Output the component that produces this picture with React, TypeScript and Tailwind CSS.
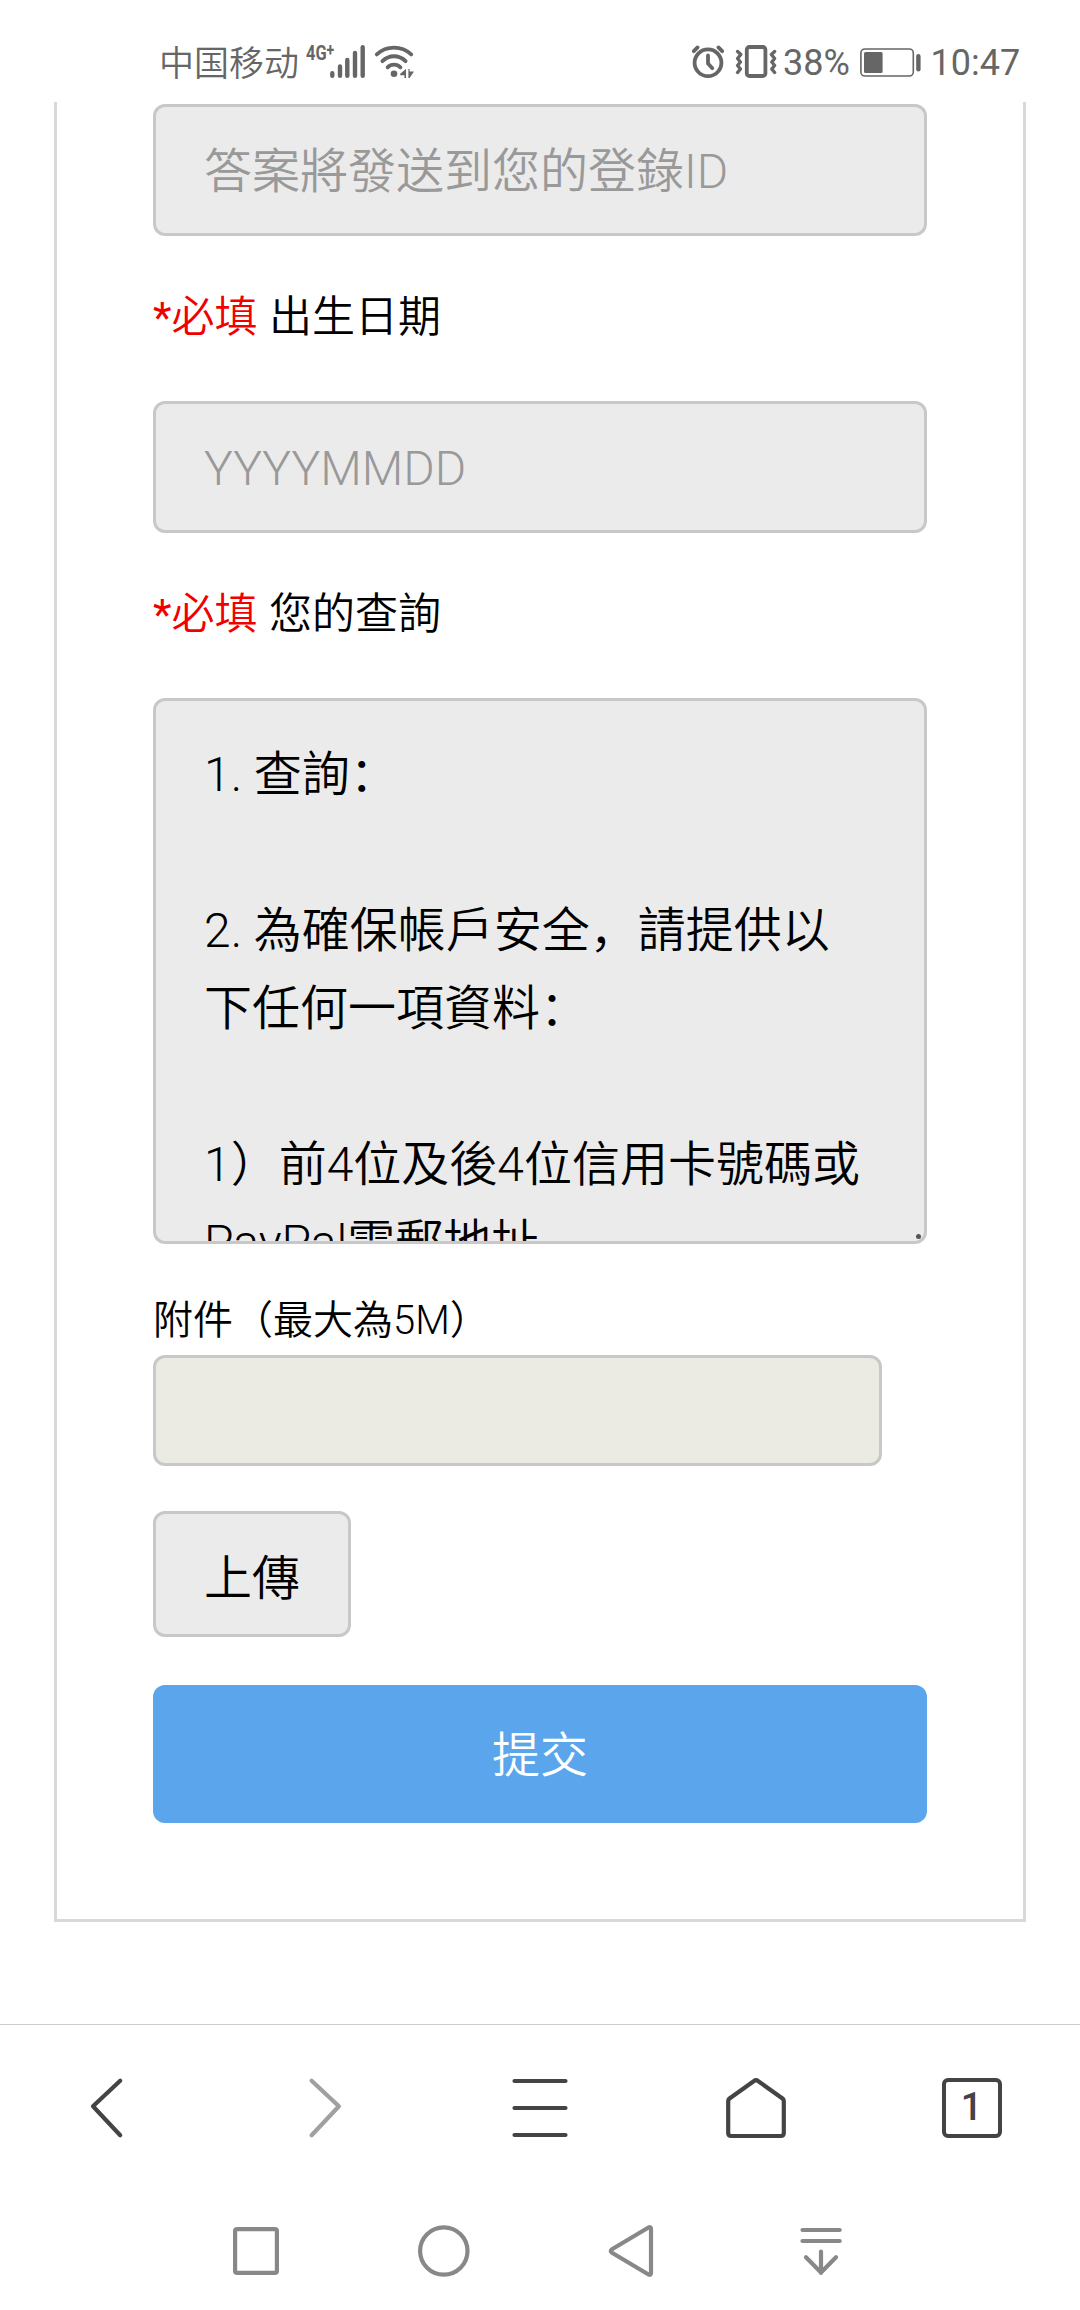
import type { ReactNode } from 'react'
import { clsx } from 'clsx'

const QUERY_TEMPLATE = [
  '1. 查詢：',
  '',
  '2. 為確保帳戶安全，請提供以',
  '下任何一項資料：',
  '',
  '1）前4位及後4位信用卡號碼或',
  'PayPal電郵地址',
]

function SignalIcon() {
  return (
    <svg className="h-9 w-[38px]" viewBox="0 0 38 36" stroke="currentColor" strokeWidth="4.4" strokeLinecap="round">
      <path d="M4.3 29.2V31.8M12 22.5V31.8M19.3 16V31.8M27 9V31.8M34.7 3.2V31.8" />
    </svg>
  )
}

function WifiIcon() {
  return (
    <svg className="h-9 w-[42px]" viewBox="0 0 42 36" fill="none" stroke="currentColor" strokeWidth="3.8" strokeLinecap="round">
      <path d="M3.8 10.4C13.5 1.3 28.5 1.3 38.2 10.4M9.4 17.2C16 10.6 26 10.6 32.6 17.2M14.6 23.3C18.2 19.7 23.8 19.7 27.4 23.3" />
      <circle cx="21" cy="29.8" r="3.3" fill="currentColor" stroke="none" />
      <path d="M33 25V34H31.4V31.2H27.2V29.8ZM35.4 25H36.6V27.6H41L36.6 34H35.4Z" fill="currentColor" stroke="none" />
    </svg>
  )
}

function AlarmIcon() {
  return (
    <svg className="h-9 w-[34px]" viewBox="0 0 34 36" fill="none" stroke="currentColor" strokeWidth="3.8" strokeLinecap="round" strokeLinejoin="round">
      <circle cx="17" cy="18.8" r="13.4" />
      <path d="M17 11.5V19.5L21.3 24.2M2.8 7.2L6.6 3.4M31.2 7.2L27.4 3.4" />
    </svg>
  )
}

function VibrateIcon() {
  return (
    <svg className="h-9 w-[42px]" viewBox="0 0 42 36" fill="none" stroke="currentColor" strokeWidth="3.4" strokeLinecap="round" strokeLinejoin="round">
      <rect x="11.8" y="3" width="18.6" height="29" rx="2.5" strokeWidth="3.8" />
      <path d="M2.6 7.5L5.8 10.5L2.6 14.5L5.4 18L2.6 21.5L5.4 25L2.6 28.5M39.6 7.5L36.4 10.5L39.6 14.5L36.8 18L39.6 21.5L36.8 25L39.6 28.5" />
    </svg>
  )
}

function BatteryIcon() {
  return (
    <svg className="h-9 w-[62px]" viewBox="0 0 62 36" fill="currentColor">
      <rect x="0.9" y="5" width="52.4" height="27" rx="4" fill="none" stroke="currentColor" strokeWidth="1.6" />
      <rect x="4" y="8" width="18.6" height="21" rx="1.5" />
      <rect x="56.2" y="10" width="4.4" height="17.5" rx="2.2" />
    </svg>
  )
}

function StatusBar() {
  return (
    <header className="flex h-[102px] shrink-0 items-start pt-[44px] text-[#666666]">
      <span className="ml-[159px] w-[141px] text-[35px] leading-[42px] font-[350]">中国移动</span>
      <span className="ml-[6px] w-[22px] origin-left scale-x-[0.78] text-[21px] leading-[18px] font-bold whitespace-nowrap">
        4G<sup className="-top-1 text-[18px] leading-none">+</sup>
      </span>
      <SignalIcon />
      <span className="ml-[7px] flex">
        <WifiIcon />
      </span>
      <div className="ml-[275.5px] flex">
        <AlarmIcon />
        <span className="ml-[10.5px] flex">
          <VibrateIcon />
        </span>
        <span className="ml-[6px] w-[72px] text-[36px] leading-[39px]">38%</span>
        <span className="ml-[4.5px] flex">
          <BatteryIcon />
        </span>
        <span className="ml-[9px] text-[36px] leading-[39px]">10:47</span>
      </div>
    </header>
  )
}

function Field({ children }: { children: ReactNode }) {
  return (
    <div className="h-[132px] rounded-xl border-3 border-[#c8c8c8] bg-[#ebebeb] px-12 pt-[2px] text-5xl leading-[126px] text-[#999999]">
      {children}
    </div>
  )
}

function RequiredLabel({ children }: { children: ReactNode }) {
  return (
    <p className="h-[165px] text-[43px] leading-[162px]">
      <span className="mr-px text-[#f20000]">
        <span className="font-normal">*</span>必填
      </span>{' '}
      {children}
    </p>
  )
}

function InquiryForm() {
  return (
    <form className="mx-[54px] flex h-[1820px] flex-col border-3 border-t-0 border-[#d9d9d9] px-24 pt-[2px] font-[350] text-black">
      <Field>答案將發送到您的登錄ID</Field>
      <RequiredLabel>出生日期</RequiredLabel>
      <Field>YYYYMMDD</Field>
      <RequiredLabel>您的查詢</RequiredLabel>

      <div className="relative h-[546px] overflow-hidden rounded-xl border-3 border-[#c8c8c8] bg-[#ebebeb] px-12 pt-[35px] text-5xl">
        {QUERY_TEMPLATE.map((line, i) => (
          <p key={i} className="h-[78px] leading-[78px] whitespace-nowrap">
            {line}
          </p>
        ))}
        <span className="absolute right-[3px] bottom-[2px] size-[5px] rounded-full bg-[#555555]" />
      </div>

      <p className="h-[111px] pt-[39px] text-[40px] leading-[76px]">附件（最大為5M）</p>
      <div className="h-[111px] w-[729px] rounded-xl border-3 border-[#c8c8c8] bg-[#ebebe3]" />

      <button
        type="button"
        className="mt-[45px] h-[126px] w-[198px] rounded-xl border-3 border-[#c8c8c8] bg-[#ebebeb] pt-[9px] text-5xl"
      >
        上傳
      </button>
      <button type="button" className="mt-12 h-[138px] rounded-xl bg-[#5aa5eb] pt-[3px] text-5xl text-white">
        提交
      </button>
    </form>
  )
}

function NavIcon({ className, children }: { className?: string; children: ReactNode }) {
  return (
    <svg
      className={clsx('size-[72px]', className)}
      viewBox="0 0 72 72"
      fill="none"
      stroke="currentColor"
      strokeWidth="4.2"
      strokeLinecap="round"
      strokeLinejoin="round"
    >
      {children}
    </svg>
  )
}

function BrowserBar() {
  return (
    <nav className="grid h-[167px] shrink-0 grid-cols-5 items-center justify-items-center border-t border-[#cccccc] text-[#444444]">
      <NavIcon>
        <path d="M48.2 8.7L21 34.3L48.2 63.3" />
      </NavIcon>
      <NavIcon className="text-[#a0a0a0]">
        <path d="M23.6 8.7L50.9 34.3L23.6 63.3" />
      </NavIcon>
      <NavIcon>
        <path d="M10.5 9H61.5M10.5 36H61.5M10.5 63H61.5" />
      </NavIcon>
      <NavIcon>
        <path d="M36 8.2Q37 8.2 38 9L62.5 26.5Q63.8 27.5 63.8 29V61Q63.8 64 60.8 64H11.2Q8.2 64 8.2 61V29Q8.2 27.5 9.5 26.5L34 9Q35 8.2 36 8.2Z" />
      </NavIcon>
      <div className="flex size-[60px] items-center justify-center rounded-md border-4 border-[#444444] pr-px pb-[2px] text-[38px] leading-none font-medium">
        1
      </div>
    </nav>
  )
}

function SystemBar() {
  return (
    <nav className="flex h-[119px] shrink-0 items-start justify-between pt-6 pr-[224px] pl-[220px] text-[#888888]">
      <NavIcon>
        <rect x="15.1" y="14.1" width="41.8" height="43.8" rx="2" />
      </NavIcon>
      <NavIcon>
        <circle cx="35.8" cy="36" r="23.7" />
      </NavIcon>
      <NavIcon>
        <path d="M55 14V58Q55 60.5 52.5 59.5L16 37.8Q13.5 36 16 34.2L52.5 12.5Q55 11.5 55 14Z" />
      </NavIcon>
      <NavIcon>
        <path d="M18.5 15H55.7M18.5 26H55.7M37 36.5V58M22 42.3L37 57.5L52 42.3" />
      </NavIcon>
    </nav>
  )
}

export default function App() {
  return (
    <div className="flex h-[2310px] w-[1080px] flex-col overflow-hidden bg-white font-[Roboto,'Noto_Sans_CJK_SC',sans-serif]">
      <StatusBar />
      <main className="h-[1922px] shrink-0">
        <InquiryForm />
      </main>
      <BrowserBar />
      <SystemBar />
    </div>
  )
}
